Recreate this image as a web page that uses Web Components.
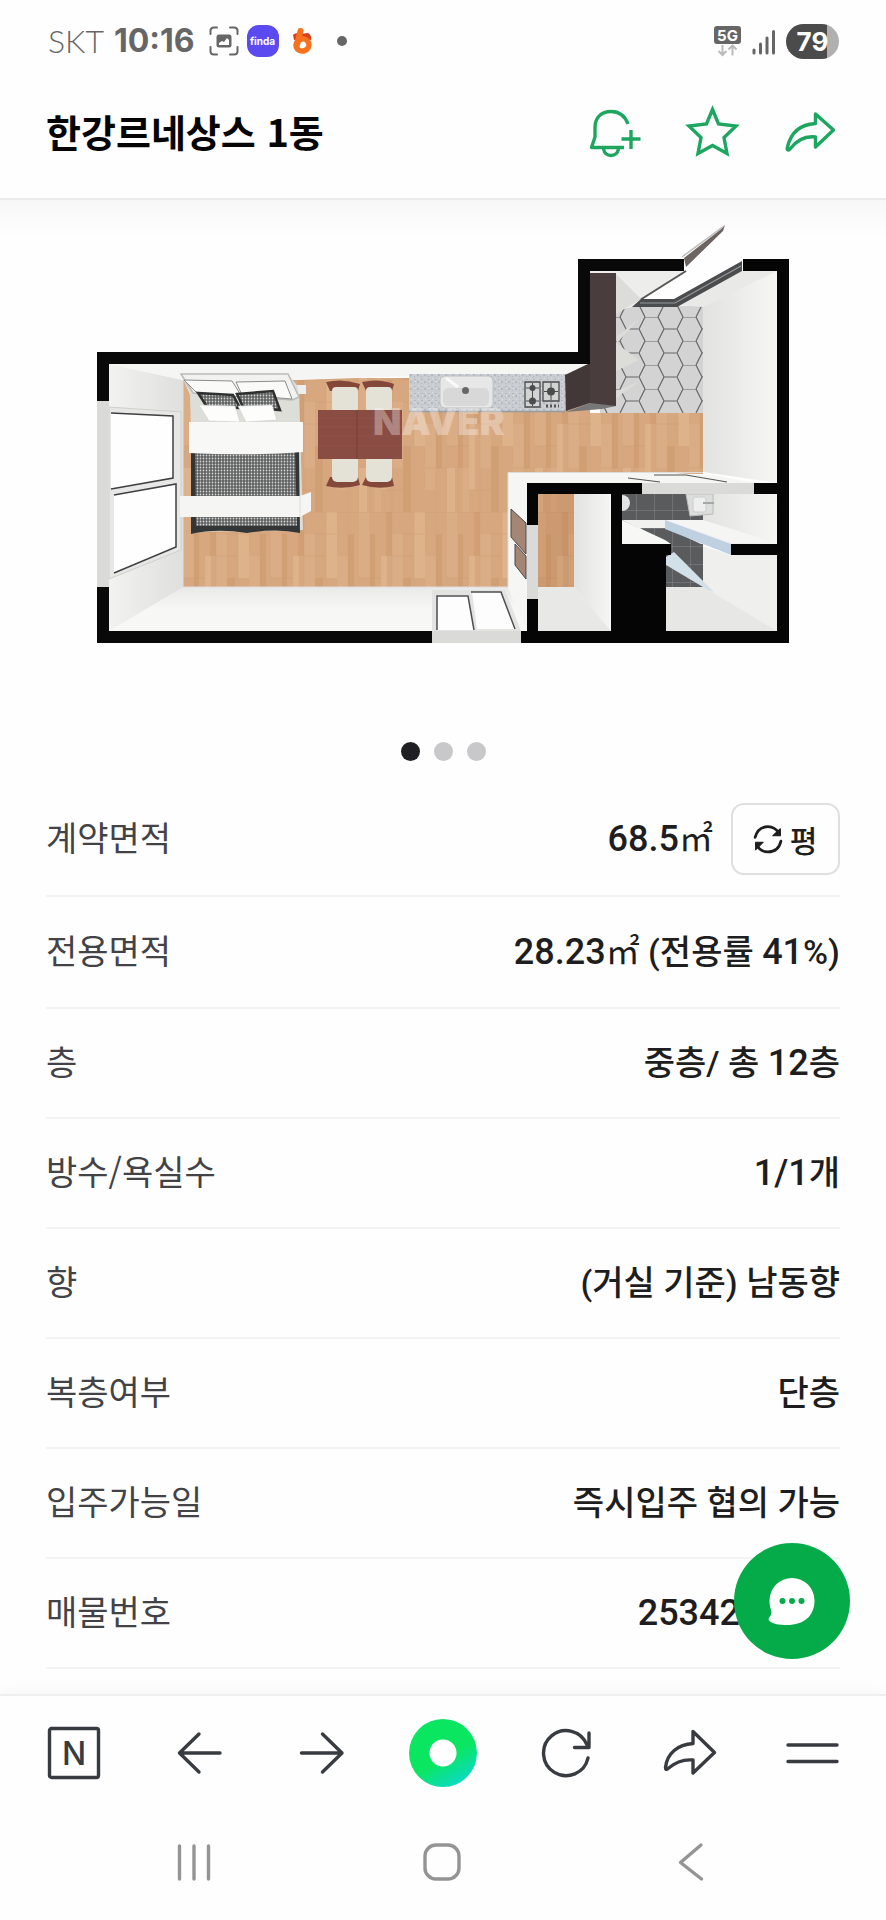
<!DOCTYPE html>
<html lang="ko">
<head>
<meta charset="utf-8">
<meta name="viewport" content="width=device-width, initial-scale=1">
<title>한강르네상스 1동</title>
<style>
  html, body { margin: 0; }
  body {
    background: #fefefe;
    color: #1e1e20;
    font-family: Roboto, "Noto Sans CJK KR", sans-serif;
  }
</style>
</head>
<body>
<listing-page></listing-page>

<script>
const ICONS = {
  bell: `<path d="M39 19C36 11 30 6.500 22 6.500 12 6.500 6 13 6 22v10L2.500 42.500H35M14.500 44c1 4.500 4 6.500 7.500 6.500s6.500-2 7.500-6.500M32.500 34h19M42 25v19" stroke-linecap="butt"/>`,
  star: `<path d="M25.500 4.500l6 14.500 17.500 2-12 11.500 3 16-14.500-8-14.500 8 3-16L2 21l17.500-2z" stroke-linejoin="miter"/>`,
  share: `<path d="M30.500 9L48.500 25l-18 17V32C18 30.500 10.500 37 5.500 43.500c-2 2.500-4 2-3-1.500C5.500 29 14 19.500 30.500 18.500z"/>`,
  shareBold: `<path d="M30 4.500L51.500 25.500 30 46V33C19 32 11.500 36 5 41.500c-1.500 1.500-2.500 1-2.500-1C4 26 15 17.500 30 16.500z"/>`,
  naver: `<rect x="1.500" y="1.500" width="49" height="49" rx="2"/><text x="26" y="37.500" text-anchor="middle" font-family="Inter, sans-serif" font-size="32" font-weight="500" fill="currentColor" stroke="none">N</text>`,
  back: `<path d="M49 26H8.500M28 7L8.500 26l19.500 19"/>`,
  forward: `<path d="M7.500 26H48M28.500 7L48 26 28.500 45"/>`,
  reload: `<path d="M48 31A22.500 22.500 0 1 1 47 18M49 6v14.500H34.500"/>`,
  menu: `<path d="M2 18h49M2 34.500h49"/>`,
  recents: `<path d="M11.500 10v33M26 10v33M40.500 10v33"/>`,
  home: `<rect x="8" y="9" width="34" height="34" rx="11"/>`,
  sysback: `<path d="M35 9L14.500 26.500 35.500 43"/>`,
  swap: `<g stroke-width="5"><path d="M2 23C6 9 14 3 26 3c9 0 16 5 21 13M50 30C47 43 38 50 26 50 17 50 9 45 5 37"/><path d="M49 7v13H35zM3 46V32h14z" fill="currentColor" stroke-width="2"/></g>`
};

function define(name, html, after) {
  const template = document.createElement('template');
  template.innerHTML = html;
  customElements.define(name, class extends HTMLElement {
    constructor() {
      super();
      this.attachShadow({ mode: 'open' }).append(template.content.cloneNode(true));
    }
    connectedCallback() { if (after) after(this, this.shadowRoot); }
  });
}

/* Line icon, drawn on a 52-unit grid */
define('line-icon', `
<style>
  :host { display: block; width: 52px; height: 52px; }
  svg { display: block; width: 100%; height: 100%; overflow: visible; }
</style>
<svg viewBox="0 0 52 52" fill="none" stroke="currentColor" stroke-width="3.400" stroke-linecap="round" stroke-linejoin="round" aria-hidden="true"></svg>`,
(el, root) => {
  root.querySelector('svg').innerHTML = ICONS[el.getAttribute('name')] || '';
});

define('icon-button', `
<style>
  :host { display: block; }
  button { display: block; margin: 0; padding: 0; border: 0; background: none; color: inherit; font: inherit; }
</style>
<button type="button"><slot></slot></button>`,
(el, root) => root.querySelector('button').setAttribute('aria-label', el.getAttribute('label')));

define('status-bar', `
<style>
  :host { display: flex; align-items: center; justify-content: space-between; height: 66px; padding: 8px 47px 0 48px; color: #666; }
  div { display: flex; align-items: center; }
  .carrier { font: 300 32px/36px Lato, sans-serif; margin-right: 10px; }
  time { font: 700 32px/36px Inter, sans-serif; margin-right: 14px; }
  svg { display: block; }
  .gap { margin-right: 10px; }
  .finda { width: 32px; height: 32px; border-radius: 12px; background: #5b4af0; color: #fff; font: 700 10px/32px Inter, sans-serif; text-align: center; margin: 0 12px 0 8px; }
  .dot { width: 10px; height: 10px; border-radius: 50%; background: #666; margin-left: 22px; }
  .battery { width: 53px; height: 35px; border-radius: 18px; justify-content: center; background: linear-gradient(90deg, #4b4b4b 41px, #b0b0b0 41px); color: #fff; font: 700 26px/35px Inter, sans-serif; }
</style>
<div>
  <span class="carrier">SKT</span><time>10:16</time>
  <svg width="30" height="30" viewBox="0 0 30 30" fill="none" stroke="#666" stroke-width="2" stroke-linecap="round"><path d="M1.500 8V5q0-3.500 3.500-3.500h3M21 1.500h4q3.500 0 3.500 3.500v3M28.500 21v4q0 3.500-3.500 3.500h-4M8 28.500H5q-3.500 0-3.500-3.500v-4"/><rect x="7.500" y="8.500" width="15" height="13" rx="2.500" fill="#666" stroke="none"/><path d="M10 19v-2l3-2 2 1 3-4 2 2v5z" fill="#fff" stroke="none"/></svg>
  <span class="finda">finda</span>
  <svg width="24" height="32" viewBox="0 0 24 32"><path d="M2 10q2-3 7-1l8-1q4 2 3 7L3 15z" fill="#d9401f"/><path d="M9.500 6L6 20" stroke="#f5731f" stroke-width="6" stroke-linecap="round"/><ellipse cx="11.500" cy="20" rx="6.500" ry="6" fill="none" stroke="#f5731f" stroke-width="5.500" transform="rotate(-20 11.500 20)"/></svg>
  <span class="dot"></span>
</div>
<div>
  <svg class="gap" width="28" height="32" viewBox="0 0 28 32"><rect width="27" height="18" rx="3" y="1" fill="#666"/><text x="13.500" y="15.500" text-anchor="middle" font-family="Inter, sans-serif" font-size="15" font-weight="700" fill="#fff">5G</text><path d="M8.500 20v9.500M4.500 26l4 4 4-4M18.500 30.500V21M14.500 24.500l4-4 4 4" fill="none" stroke="#bbb" stroke-width="2"/></svg>
  <svg class="gap" width="24" height="28" viewBox="0 0 24 28" stroke="#666" stroke-width="3" stroke-linecap="round"><path d="M2 23v3M8.500 17v9M15 11v15M21.500 4.500V26"/></svg>
  <div class="battery">79</div>
</div>`);

define('title-bar', `
<style>
  :host { display: flex; align-items: center; justify-content: space-between; height: 114px; padding: 0 49px 10px 46px; }
  h1 { margin: 0; font: 700 38px/56px "Noto Sans CJK KR", sans-serif; color: #050505; }
  nav { display: flex; gap: 46px; color: #1da65f; }
</style>
<h1><slot></slot></h1>
<nav aria-label="매물 메뉴">
  <icon-button label="알림"><line-icon name="bell"></line-icon></icon-button>
  <icon-button label="관심"><line-icon name="star"></line-icon></icon-button>
  <icon-button label="공유"><line-icon name="share"></line-icon></icon-button>
</nav>`);

define('floor-plan', `
<style>
  :host { display: block; background: linear-gradient(#f7f7f7, #fefefe 38px); }
  svg { display: block; width: 100%; max-width: 886px; height: auto; margin: 0 auto; }
</style>
<svg viewBox="0 200 886 520" role="img" aria-label="평면도">
  <defs>
    <pattern id="wood" x="183" y="380" width="88" height="132" patternUnits="userSpaceOnUse">
      <rect width="88" height="132" fill="#d7a880"/>
      <path d="M0 0h11v66H0zM33 22h11v66H33zM66 44h11v66H66zM16 88h6v44h-6z" fill="#dbad86"/>
      <path d="M11 22h5v66h-5zM44 66h8v66h-8zM77 22h6v66h-6zM27 0h6v44h-6z" fill="#d19f74"/>
      <path d="M22 44h6v66h-6zM55 0h11v66H55zM0 88h8v44H0z" fill="#deb28b"/>
      <path d="M0 66h22M22 110h22M44 22h22M66 88h22M0 0h88M33 44h22" stroke="#c3905f" stroke-width=".6" opacity=".5"/>
      <path d="M11 0v132M33 0v132M55 0v132M77 0v132" stroke="#c08f66" stroke-width=".5" opacity=".35"/>
    </pattern>
    <pattern id="hex" x="639" y="317" width="38" height="24" patternUnits="userSpaceOnUse">
      <rect width="38" height="24" fill="#d3d3d4"/>
      <path d="M0 12L6 0H19L25 12H38M25 12l-6 12M0 12l6 12" fill="none" stroke="#666" stroke-width="1.200"/>
    </pattern>
    <pattern id="tile" x="636" y="492" width="18" height="18" patternUnits="userSpaceOnUse">
      <rect width="18" height="18" fill="#5a5b5c"/><path d="M0 0h18M0 0v18" stroke="#85878a" stroke-width="1"/>
    </pattern>
    <pattern id="knit" width="3" height="3" patternUnits="userSpaceOnUse">
      <rect width="3" height="3" fill="#d5d6d4"/><path d="M0 1h3M1 0v3" stroke="#484b4b" stroke-width="1.200"/>
    </pattern>
    <pattern id="stone" width="7" height="7" patternUnits="userSpaceOnUse">
      <rect width="7" height="7" fill="#c9cdd2"/><path d="M1 1h2v1H1zM4 3h2v2H4zM1 5h1v1H1z" fill="#b5bac1"/><path d="M5 0h1v1H5zM2 3h1v1H2z" fill="#dde0e4"/>
    </pattern>
    <linearGradient id="left"><stop stop-color="#f2f2f1"/><stop offset="1" stop-color="#dfdfde"/></linearGradient>
    <linearGradient id="right"><stop stop-color="#e2e2e1"/><stop offset="1" stop-color="#f6f6f5"/></linearGradient>
    <linearGradient id="low" x2="0" y2="1"><stop stop-color="#e9e9e8"/><stop offset=".5" stop-color="#f7f7f6"/><stop offset="1" stop-color="#f8f8f7"/></linearGradient>
  </defs>

  <!-- floors -->
  <path d="M183 378H590V413H703V474H508V588H183z" fill="url(#wood)"/>
  <path d="M538 494h36v94h-36z" fill="url(#wood)"/>
  <path d="M538 494h36v94h-36z" fill="#a86b3c" opacity=".22"/>
  <path d="M600 306H703V413H600z" fill="url(#hex)"/>
  <path d="M622 494H703V588H622z" fill="url(#tile)"/>

  <!-- main room walls -->
  <path d="M109 364L183 380V588L109 631z" fill="url(#left)"/>
  <path d="M109 364H590L565 376 470 374 300 380H183z" fill="#f5f5f3"/>
  <path d="M109 631L183 587H508L527 631z" fill="url(#low)"/>
  <path d="M508 472H660L720 476 754 483V494H527V631L508 587z" fill="#f6f6f5"/>
  <path d="M183 380V587H508V472.500H703" fill="none" stroke="#ddd" stroke-width="1"/>

  <!-- left window -->
  <path d="M109 407L181 412V550L109 579z" fill="#e7e7e6" stroke="#cfcfce"/>
  <path d="M111 413L173 416V478L111 489zM114 495L176 484V547L114 573z" fill="#fefefe"/>
  <path d="M111 413L173 416V478L111 489M114 495L176 484V547L114 573" fill="none" stroke="#3e4042" stroke-width="1.500"/>

  <!-- bed -->
  <path d="M181 374H288L299 388 303 530 194 532 190 395z" fill="#deded9"/>
  <path d="M181 374H288L299 397 292 400 193 393z" fill="#f2f2f0" stroke="#bbb" stroke-width="1.500"/>
  <path d="M184 380L232 381 242 397 197 393zM236 382L285 381 292 399 242 395z" fill="#fafaf9" stroke="#8b8c8a" stroke-width="1"/>
  <path d="M198 393L233 395 240 408 207 407zM237 394L273 391 280 410 243 407z" fill="url(#knit)" stroke="#2f3131" stroke-width="2.500"/>
  <path d="M199 405L235 406 240 422 209 421zM238 406L272 405 277 420 246 422z" fill="#fdfdfc" stroke="#ccc" stroke-width=".6"/>
  <path d="M191 450H299L300 533Q277 528 247 533 217 528 191 534z" fill="#323636"/>
  <path d="M195 450H295L297 526H196z" fill="url(#knit)"/>
  <path d="M189 422H303V452Q250 456 189 453z" fill="#f8f8f6"/>
  <path d="M180 496H300L311 492V511L300 517H180z" fill="#f5f5f3"/>
  <path d="M300 496V517" stroke="#ddd"/>
  <path d="M297 385h9v9h-7z" fill="#eee"/>

  <!-- table and chairs -->
  <g fill="#84483b">
    <path d="M326 382Q343 378 360 384L358 391H330zM362 382Q379 378 394 384L392 391H366zM326 486Q343 490 360 485L358 477H330zM362 485Q379 490 394 486L392 477H366z"/>
  </g>
  <g fill="#e4e1d6">
    <rect x="332" y="387" width="26" height="25" rx="4"/><rect x="366" y="387" width="26" height="25" rx="4"/>
    <rect x="332" y="455" width="26" height="27" rx="5"/><rect x="366" y="455" width="26" height="27" rx="5"/>
  </g>
  <path d="M318 410H402V459H318z" fill="#8a4d43"/>
  <path d="M318 418h84M318 427h84M318 436h84M318 446h84" stroke="#93554a" opacity=".7"/>
  <path d="M357 410v49" stroke="#783c34"/>

  <!-- kitchen counter -->
  <path d="M409 374H567L565 412H409z" fill="url(#stone)"/>
  <path d="M409 411.500H565" stroke="#999c9f" stroke-width="1.500"/>
  <rect x="440" y="376" width="53" height="32" rx="5" fill="#e6e7e6" stroke="#bfc1c1"/>
  <rect x="443" y="388" width="46" height="18" rx="5" fill="#d7d8d7"/>
  <circle cx="465.500" cy="390.500" r="3.500" fill="#666"/>
  <path d="M446 378L458 387" stroke="#fafafa" stroke-width="3"/>
  <g fill="#d2d3d3" stroke="#4a4b4c" stroke-width="1.300">
    <path d="M525 382h15v25h-15zM543 382h16v19h-16z"/>
    <path d="M532.500 383v23M526 388h13M526 401h13M551 383v17M544 391.500h14" stroke-width="1"/>
  </g>
  <g fill="#4b4c4d"><circle cx="532.500" cy="388" r="3"/><circle cx="532.500" cy="401" r="3.500"/><circle cx="551" cy="391.500" r="4"/></g>
  <path d="M546 406h13" stroke="#555" stroke-width="3" stroke-dasharray="2 2"/>

  <!-- entrance -->
  <path d="M590 271H684L643 300 632 307 616 311V273H590z" fill="#ededec"/>
  <path d="M643 299L686 271 696 262H742L676 301z" fill="#fefefe"/>
  <path d="M703 306L777 271V483L703 472z" fill="url(#right)"/>
  <path d="M676 305L742 271H777L703 307z" fill="#e9e9e8"/>
  <path d="M640 300L686 271" stroke="#555" stroke-width="2"/>
  <path d="M632 307L641 299H674L742 261V271L677 307z" fill="#4b4c4e"/>
  <path d="M640 303H675L741 266" fill="none" stroke="#96989a" stroke-width="1.200"/>
  <path d="M684 258L720 230 725 225 723 231 686 267z" fill="#6b6461"/>
  <path d="M682 257L724 226" stroke="#bbb" stroke-width="1.500"/>
  <path d="M616 274L641 299 616 314zM617 336L640 318 617 343zM616 343L639 360 616 371zM617 391L640 381 616 398z" fill="#dcdcd9"/>
  <path d="M565 375L590 363V403L566 411z" fill="#423838"/>
  <path d="M590 273H616V406H590z" fill="#493d3e"/>
  <path d="M566 412L590 403 616 406 602 409z" fill="#777"/>

  <!-- side windows -->
  <path d="M511 509L526 523V554L511 537zM515 544L526 556V579L515 565z" fill="#a58674" stroke="#4a4747"/>
  <path d="M432 590H505L521 631H432z" fill="#e3e3e2"/>
  <path d="M438 595H468L474 630H437zM472 592H500L515 629H477z" fill="#fdfdfd"/>
  <path d="M437 630V596H468L474 630M471 592H501L515 629" fill="none" stroke="#4d4f50" stroke-width="1.500"/>

  <!-- closet -->
  <path d="M574 494H611V631L574 587z" fill="url(#right)"/>
  <path d="M538 587H574L611 631H538z" fill="#e8e8e7"/>

  <!-- bathroom -->
  <circle cx="622" cy="503" r="8" fill="#e2e3e3"/>
  <path d="M703 494H777V544H731L703 520z" fill="url(#right)"/>
  <path d="M622 520H703L740 544H671z" fill="#f1f1f0"/>
  <path d="M640 528H667L703 545V588H666V545z" fill="url(#tile)"/>
  <path d="M622 520L665 540 671 544H622z" fill="#f7f7f6"/>
  <path d="M665 520H703L777 543H735z" fill="#f5f5f4"/>
  <path d="M665 520L731 544V555L665 529z" fill="#bfd0e0"/>
  <path d="M686 494H713V514L690 516z" fill="#dcdddd" stroke="#bbb"/>
  <rect x="693" y="497" width="13" height="15" rx="2" fill="#eee" stroke="#ccc"/>
  <path d="M703 503h11" stroke="#a6a8a8" stroke-width="2"/>
  <path d="M703 546L731 555H777V631L703 588z" fill="#efefee"/>
  <path d="M666 587H703L777 631H666z" fill="#e7e7e6"/>
  <path d="M666 557L674 552 714 592 708 590 666 565z" fill="#d2e0ea"/>

  <!-- structural walls -->
  <path d="M97 352H578V259H684V271H590V364H109V401H97z" fill="#090909"/>
  <path d="M743 259H789V643H521V631H527V599H538V631H611V494H538V525H527V483H642V494H622V544H671V555H666V631H777V555H731V544H777V494H754V483H777V271H743z" fill="#050505"/>
  <path d="M97 587H109V631H432V643H97z" fill="#090909"/>
  <path d="M97 401H109V587H97zM432 631H521V643H432zM527 525H538V599H527zM642 483H754V494H642z" fill="#dadad9"/>
  <path d="M628 478L660 482M654 475H686L727 482" fill="none" stroke="#555" stroke-width="1.200"/>
  <text x="373" y="435" font-family="Inter, sans-serif" font-size="37" font-weight="900" fill="#fff" opacity=".32">NAVER</text>
</svg>`);

define('page-dots', `
<style>
  :host { display: flex; justify-content: center; gap: 14px; padding: 22px 0 21px; }
  span { width: 19px; height: 19px; border-radius: 50%; background: #c8c8ca; }
  .on { background: #1e1e23; }
</style><span class="on"></span><span></span><span></span>`);

define('unit-button', `
<style>
  :host { display: block; }
  button { display: flex; align-items: center; justify-content: center; gap: 8px; box-sizing: border-box; width: 109px; height: 72px; margin: 0; padding: 0; border: 2px solid #dfdfe1; border-radius: 13px; background: #fefefe; color: #1e1e20; font: 500 30px/40px "Noto Sans CJK KR", sans-serif; }
  line-icon { width: 28px; height: 28px; }
</style>
<button type="button"><line-icon name="swap"></line-icon><slot></slot></button>`);

define('fact-table', `
<style>
  :host { display: block; padding: 0 46px 24px; }
  table { width: 100%; border-collapse: collapse; }
  tr { height: 110px; border-bottom: 2px solid #f3f3f4; }
  .first { height: 114px; }
  .area { height: 112px; }
  th, td { padding: 0; vertical-align: middle; white-space: nowrap; }
  th { text-align: left; font: 400 34px/50px "Noto Sans CJK KR", sans-serif; color: #434347; padding-bottom: 4px; }
  td { text-align: right; font: 500 34px/50px Roboto, "Noto Sans CJK KR", sans-serif; }
  .num { font-size: 36px; }
  .unit { font-weight: 400; }
  .pair { display: flex; align-items: center; justify-content: flex-end; gap: 18px; }
  .id { padding-right: 100px; }
</style>
<table>
  <tr class="first"><th scope="row">계약면적</th><td><div class="pair"><span><span class="num">68.5</span><span class="unit">㎡</span></span><unit-button>평</unit-button></div></td></tr>
  <tr class="area"><th scope="row">전용면적</th><td><span class="num">28.23</span><span class="unit">㎡</span> (전용률 <span class="num">41</span>%)</td></tr>
  <tr><th scope="row">층</th><td>중층/ 총 <span class="num">12</span>층</td></tr>
  <tr><th scope="row">방수/욕실수</th><td><span class="num">1/1</span>개</td></tr>
  <tr><th scope="row">향</th><td>(거실 기준) 남동향</td></tr>
  <tr><th scope="row">복층여부</th><td>단층</td></tr>
  <tr><th scope="row">입주가능일</th><td>즉시입주 협의 가능</td></tr>
  <tr><th scope="row">매물번호</th><td class="id"><span class="num">25342</span></td></tr>
</table>`);

define('chat-button', `
<style>
  :host { display: block; width: 116px; height: 116px; }
  button { display: block; width: 100%; height: 100%; margin: 0; padding: 0; border: 0; border-radius: 50%; background: #06ab49; }
  svg { display: block; }
</style>
<button type="button" aria-label="채팅 상담"><svg width="116" height="116" viewBox="0 0 116 116"><path d="M58 35a22.500 22.500 0 0 1 22.500 22.500C80.500 73 70 82 53 82c-8 0-14-1-17.500-4-1.500-1.500-1-3 .5-4.500 1.500-2 2-4 1-6.500-1-3-1.500-6-1.500-9.500A22.500 22.500 0 0 1 58 35z" fill="#fff"/><g fill="#06ab49"><circle cx="48.500" cy="58" r="3"/><circle cx="58" cy="58" r="3"/><circle cx="67.500" cy="58" r="3"/></g></svg></button>`);

define('browser-bar', `
<style>
  :host { display: grid; grid-template-columns: repeat(7, 1fr); place-items: center; box-sizing: border-box; height: 116px; padding: 0 12px; border-top: 2px solid #edeff1; background: #fefefe; color: #383b40; box-shadow: 0 -4px 14px rgba(0, 0, 0, .03); }
  .home { display: block; width: 68px; height: 68px; border-radius: 50%; background: radial-gradient(circle, #fff 13px, transparent 14px), linear-gradient(150deg, #0be661 55%, #0ad9d0 92%); }
</style>
<icon-button label="네이버 홈"><line-icon name="naver"></line-icon></icon-button>
<icon-button label="뒤로"><line-icon name="back"></line-icon></icon-button>
<icon-button label="앞으로"><line-icon name="forward"></line-icon></icon-button>
<icon-button label="그린닷"><span class="home"></span></icon-button>
<icon-button label="새로고침"><line-icon name="reload"></line-icon></icon-button>
<icon-button label="공유"><line-icon name="shareBold"></line-icon></icon-button>
<icon-button label="메뉴"><line-icon name="menu"></line-icon></icon-button>`);

define('system-bar', `
<style>
  :host { display: grid; grid-template-columns: repeat(3, 1fr); place-items: center; height: 104px; padding: 0 70px 6px; background: #fefefe; color: #949494; }
</style>
<icon-button label="최근 앱"><line-icon name="recents"></line-icon></icon-button>
<icon-button label="홈"><line-icon name="home"></line-icon></icon-button>
<icon-button label="이전"><line-icon name="sysback"></line-icon></icon-button>`);

define('listing-page', `
<style>
  :host { display: flex; flex-direction: column; min-height: 100vh; }
  header { border-bottom: 2px solid #ececec; background: #fefefe; }
  main { flex: 1; }
  footer { position: sticky; bottom: 0; }
  chat-button { position: absolute; right: 36px; bottom: calc(100% + 35px); }
</style>
<header><status-bar></status-bar><title-bar>한강르네상스 1동</title-bar></header>
<main><floor-plan></floor-plan><page-dots></page-dots><fact-table></fact-table></main>
<footer><chat-button></chat-button><browser-bar></browser-bar><system-bar></system-bar></footer>`);
</script>
</body>
</html>
